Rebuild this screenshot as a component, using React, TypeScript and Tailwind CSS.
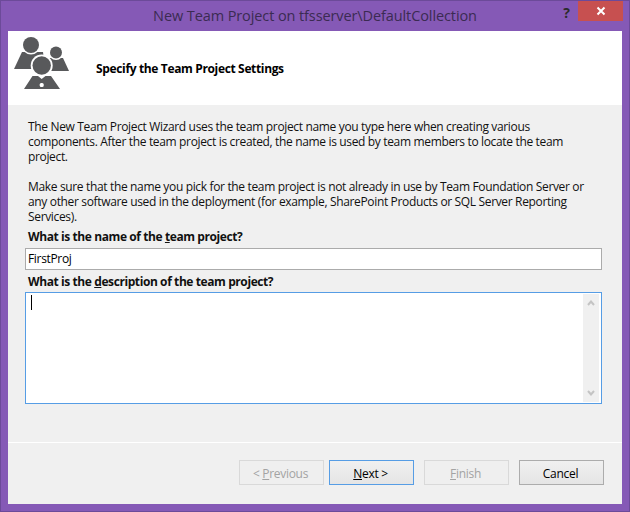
const ff = "font-['Open_Sans','Noto_Sans',sans-serif]";

function TeamIcon() {
  return (
    <svg width="58" height="56" viewBox="0 0 58 56" className="shrink-0 mb-[8px]">
      <path d="M8 16 H29 L31 33 H0 Z" fill="#58595b" />
      <circle cx="17" cy="9" r="9.5" fill="#ffffff" />
      <circle cx="17" cy="9" r="8" fill="#58595b" />
      <path d="M34 22 H49 L55 35 H34 Z" fill="#58595b" />
      <circle cx="42" cy="16.5" r="7.5" fill="#ffffff" />
      <circle cx="42" cy="16.5" r="6" fill="#58595b" />
      <circle cx="27.7" cy="29.5" r="11" fill="#ffffff" />
      <circle cx="27.7" cy="29.5" r="9.2" fill="#58595b" />
      <path d="M18.5 40 H24 L27.7 43 L31.5 40 H37 L46 53 H10 Z" fill="#58595b" />
      <rect x="25.7" y="47" width="4" height="4" rx="1.5" fill="#ffffff" />
    </svg>
  );
}

function Btn({ u, rest, pre = "", variant }: { u: string; rest: string; pre?: string; variant: "disabled" | "focus" | "normal" }) {
  const cls =
    variant === "disabled"
      ? "border-[#d9d9d9] bg-[#efefef] text-[#a3a3a3]"
      : variant === "focus"
      ? "border-[#569de5] bg-gradient-to-b from-[#f0f0f0] to-[#e5e5e5] text-black"
      : "border-[#acacac] bg-gradient-to-b from-[#f0f0f0] to-[#e5e5e5] text-black";
  return (
    <div className={`w-[85px] h-[25px] border flex items-center justify-center text-[12px] tracking-[-0.3px] ${cls}`}>
      <span className="whitespace-pre mt-[2px] -ml-[2px]">
        {pre}
        <span className="underline">{u}</span>
        {rest}
      </span>
    </div>
  );
}

export default function App() {
  return (
    <div className={`w-[630px] h-[512px] bg-[#8559b6] border border-[#6c4a99] flex flex-col overflow-hidden ${ff}`}>
      <div className="h-[30px] shrink-0 flex items-start relative">
        <div className="flex-1 text-center text-[14.5px] leading-[30px] text-[#3b2b52] tracking-[-0.1px]">
          New Team Project on tfsserver\DefaultCollection
        </div>
        <div className="absolute right-[59px] top-[2px] text-[14px] leading-[20px] font-bold text-[#2b2b2b]">?</div>
        <div className="absolute right-[6px] top-0 w-[45px] h-[20px] bg-[#c75050] flex items-center justify-center">
          <svg width="10" height="10" viewBox="0 0 10 10">
            <path d="M1.5 1.5 L8.5 8.5 M8.5 1.5 L1.5 8.5" stroke="#ffffff" strokeWidth="2" />
          </svg>
        </div>
      </div>
      <div className="mx-[7px] h-[473px] bg-[#f0f0f0] flex flex-col">
        <div className="h-[74px] bg-white flex items-center shrink-0 pl-[6px]">
          <TeamIcon />
          <div className="ml-[24px] mt-px text-[12px] font-bold text-black tracking-[-0.35px]">Specify the Team Project Settings</div>
        </div>
        <div className="px-[17px] pt-[14px] flex-1 flex flex-col">
          <div className="pl-[3px] text-[12px] leading-[15px] text-[#111] tracking-[-0.345px] w-[585px]">
            <p>The New Team Project Wizard uses the team project name you type here when creating various<br />components. After the team project is created, the name is used by team members to locate the team<br />project.</p>
            <p className="mt-[15px]">Make sure that the name you pick for the team project is not already in use by Team Foundation Server or<br />any other software used in the deployment (for example, SharePoint Products or SQL Server Reporting<br />Services).</p>
          </div>
          <div className="mt-[5px] pl-[3px] text-[12px] leading-[15px] font-bold text-[#111] tracking-[-0.41px]">
            What is the name of the <span className="underline">t</span>eam project?
          </div>
          <div className="mt-[4px] w-[577px] h-[22px] bg-white border border-[#ababab] flex items-center pl-[2px] text-[12px] text-black tracking-[-0.33px]">
            FirstProj
          </div>
          <div className="mt-[4px] pl-[3px] text-[12px] leading-[15px] font-bold text-[#111] tracking-[-0.41px]">
            What is the <span className="underline">d</span>escription of the team project?
          </div>
          <div className="mt-[3px] w-[577px] h-[112px] bg-white border border-[#569de5] flex justify-between p-px">
            <div className="ml-[4px] mt-[1px] w-px h-[15px] bg-black" />
            <div className="w-[16px] h-[108px] mr-px ml-auto bg-[#f0f0f0] flex flex-col items-center justify-between py-[6px]">
              <svg width="8" height="6" viewBox="0 0 8 6"><path d="M1 5 L4 1.5 L7 5" fill="none" stroke="#c4c4c4" strokeWidth="2" /></svg>
              <svg width="8" height="6" viewBox="0 0 8 6"><path d="M1 1 L4 4.5 L7 1" fill="none" stroke="#c4c4c4" strokeWidth="2" /></svg>
            </div>
          </div>
        </div>
        <div className="h-[62px] shrink-0 border-t border-white pt-[17px] pr-[18px] flex justify-end">
          <div className="flex">
            <Btn pre="< " u="P" rest="revious" variant="disabled" />
            <div className="ml-[5px]"><Btn u="N" rest="ext >" variant="focus" /></div>
            <div className="ml-[10px]"><Btn u="F" rest="inish" variant="disabled" /></div>
            <div className="ml-[10px]"><Btn u="" rest="Cancel" variant="normal" /></div>
          </div>
        </div>
      </div>
    </div>
  );
}
